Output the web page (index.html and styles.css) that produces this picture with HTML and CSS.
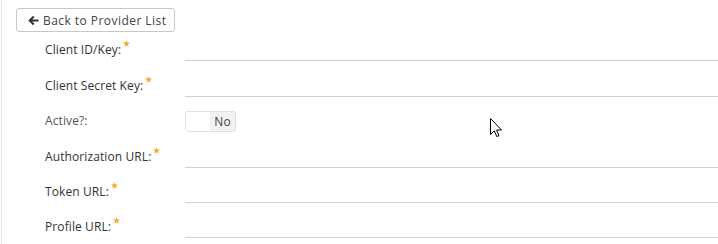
FILE: index.html
```html
<!DOCTYPE html>
<html>
<head>
<meta charset="utf-8">
<link rel="stylesheet" href="styles.css">
</head>
<body>
<div class="page">
  <div class="toolbar">
    <button class="back-btn">
      <svg class="back-icon" width="11" height="11" viewBox="0 0 11 11"><path d="M10.5 5.5H2.2M5.8 1.5L1.7 5.5L5.8 9.5" fill="none" stroke="#333" stroke-width="2"/></svg>
      <span>Back to Provider List</span>
    </button>
  </div>
  <div class="form">
    <div class="row">
      <label class="label">Client ID/Key:<span class="req"><svg width="7" height="7" viewBox="0 0 10 10"><path d="M5 0L6.3 3.4L10 3.6L7.1 6L8.1 9.6L5 7.6L1.9 9.6L2.9 6L0 3.6L3.7 3.4Z" fill="#f0a830"/></svg></span></label>
      <div class="input"></div>
    </div>
    <div class="row">
      <label class="label">Client Secret Key:<span class="req"><svg width="7" height="7" viewBox="0 0 10 10"><path d="M5 0L6.3 3.4L10 3.6L7.1 6L8.1 9.6L5 7.6L1.9 9.6L2.9 6L0 3.6L3.7 3.4Z" fill="#f0a830"/></svg></span></label>
      <div class="input"></div>
    </div>
    <div class="row">
      <label class="label light">Active?:</label>
      <div class="toggle"><span class="toggle-off"></span><span class="toggle-no">No</span></div>
    </div>
    <div class="row">
      <label class="label">Authorization URL:<span class="req"><svg width="7" height="7" viewBox="0 0 10 10"><path d="M5 0L6.3 3.4L10 3.6L7.1 6L8.1 9.6L5 7.6L1.9 9.6L2.9 6L0 3.6L3.7 3.4Z" fill="#f0a830"/></svg></span></label>
      <div class="input"></div>
    </div>
    <div class="row">
      <label class="label">Token URL:<span class="req"><svg width="7" height="7" viewBox="0 0 10 10"><path d="M5 0L6.3 3.4L10 3.6L7.1 6L8.1 9.6L5 7.6L1.9 9.6L2.9 6L0 3.6L3.7 3.4Z" fill="#f0a830"/></svg></span></label>
      <div class="input"></div>
    </div>
    <div class="row">
      <label class="label">Profile URL:<span class="req"><svg width="7" height="7" viewBox="0 0 10 10"><path d="M5 0L6.3 3.4L10 3.6L7.1 6L8.1 9.6L5 7.6L1.9 9.6L2.9 6L0 3.6L3.7 3.4Z" fill="#f0a830"/></svg></span></label>
      <div class="input"></div>
    </div>
  </div>
  <svg class="cursor" width="13" height="20" viewBox="0 0 13 20"><path d="M0.5 0.5V16.5L4.3 12.8L6.8 18.6L9 17.6L6.6 12H11.5Z" fill="#fff" stroke="#000" stroke-width="1" stroke-linejoin="miter"/></svg>
</div>
</body>
</html>
```

FILE: styles.css
```css
html, body {
  margin: 0;
  padding: 0;
  background: #fff;
}
.page {
  position: relative;
  width: 717px;
  height: 244px;
  margin-left: 1px;
  border-left: 1px solid #e6e6e6;
  box-sizing: border-box;
  font-family: "Open Sans", "Liberation Sans", sans-serif;
  color: #333;
  overflow: hidden;
}
.toolbar {
  padding: 8px 0 0 14px;
  height: 24px;
}
.back-btn {
  display: flex;
  align-items: center;
  gap: 4px;
  height: 24px;
  width: 159px;
  padding: 0 0 0 11px;
  border: 1px solid #c8c8c8;
  border-radius: 3px;
  background: #fff;
  font-family: "Open Sans", "Liberation Sans", sans-serif;
  font-size: 12px;
  letter-spacing: 0.45px;
  color: #444;
  box-sizing: border-box;
}
.back-icon {
  flex: none;
}
.form {
  padding-top: 1.3px;
}
.row {
  display: flex;
  align-items: center;
  height: 35.4px;
}
.label {
  width: 140px;
  padding-left: 43px;
  box-sizing: content-box;
  font-size: 12px;
  letter-spacing: 0.1px;
  color: #333;
  position: relative;
  top: -1px;
}
.label.light {
  color: #555;
}
.req {
  display: inline-block;
  vertical-align: top;
  margin-left: 2px;
  position: relative;
  top: -7px;
}
.input {
  flex: 1;
  height: 20px;
  border-bottom: 1px solid #cfcfcf;
  box-sizing: border-box;
  position: relative;
  top: 0.5px;
}
.toggle {
  display: flex;
  width: 51px;
  height: 21px;
  border: 1px solid #e0e0e0;
  border-radius: 3px;
  box-sizing: border-box;
  overflow: hidden;
  font-size: 12px;
}
.toggle-off {
  flex: 1;
  background: #fff;
}
.toggle-no {
  width: 25px;
  background: #f2f2f2;
  color: #444;
  display: flex;
  align-items: center;
  justify-content: center;
}
.cursor {
  position: absolute;
  left: 488px;
  top: 118px;
}
```
